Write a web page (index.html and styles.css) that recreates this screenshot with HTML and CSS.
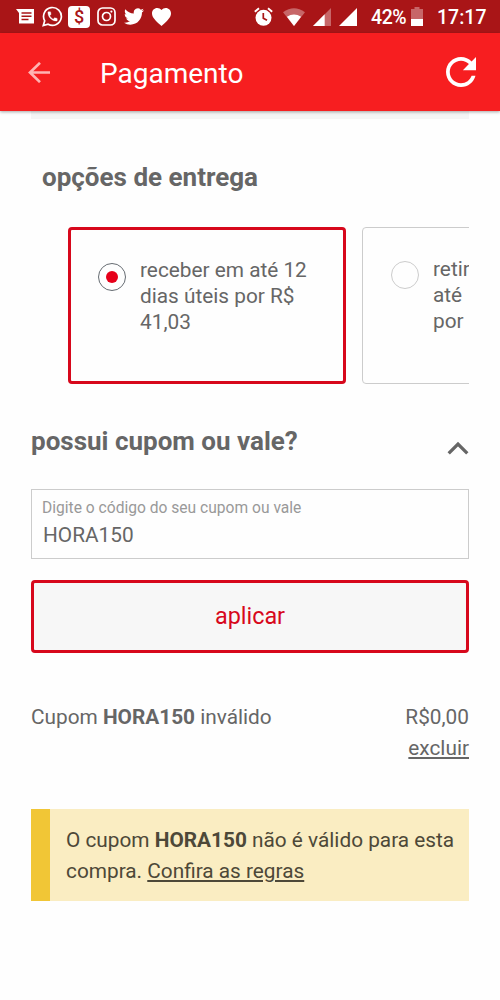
FILE: index.html
```html
<!DOCTYPE html>
<html lang="pt-BR">
<head>
<meta charset="utf-8">
<title>Pagamento</title>
<link rel="stylesheet" href="styles.css">
</head>
<body>
<div class="status">
  <div class="notifications">
    <svg width="18" height="15" viewBox="0 0 18 15"><path fill="#fff" fill-rule="evenodd" d="M0 0H18V14.500H3V4ZM5.500 3.300V4.800H15.500V3.300ZM5.500 6.500V8H15.500V6.500ZM5.500 9.700V11.200H12.500V9.700Z"/></svg>
    <svg class="whatsapp" width="21" height="21" viewBox="0 0 21 21"><path d="M1.300 19.600 2.700 14.800A8.900 8.900 0 1 1 6.100 18.200Z" fill="none" stroke="#fff" stroke-width="1.700"/><path transform="translate(4.300 4.100) scale(.52)" fill="#fff" stroke="#fff" stroke-width=".6" d="M6.620 10.790c1.440 2.830 3.760 5.140 6.590 6.590l2.200-2.200c.27-.27.67-.36 1.020-.24 1.120.37 2.330.57 3.570.57.55 0 1 .45 1 1V20c0 .55-.45 1-1 1-9.390 0-17-7.610-17-17 0-.55.45-1 1-1h3.500c.55 0 1 .45 1 1 0 1.250.2 2.450.57 3.570.11.35.03.74-.25 1.020z"/></svg>
    <span class="cash">$</span>
    <svg class="instagram" width="19" height="19" viewBox="0 0 19 19" fill="none" stroke="#fff"><rect x="1" y="1" width="17" height="17" rx="4.500" stroke-width="1.700"/><circle cx="9.500" cy="9.500" r="4" stroke-width="1.700"/><circle cx="14.400" cy="4.600" r="1.100" fill="#fff" stroke="none"/></svg>
    <svg class="twitter" width="20" height="17" viewBox="0 2 24 20"><path fill="#fff" d="M23.953 4.570a10 10 0 01-2.825.775 4.958 4.958 0 002.163-2.723c-.951.555-2.005.959-3.127 1.184a4.920 4.920 0 00-8.384 4.482C7.690 8.095 4.067 6.130 1.640 3.162a4.822 4.822 0 00-.666 2.475c0 1.710.87 3.213 2.188 4.096a4.904 4.904 0 01-2.228-.616v.06a4.923 4.923 0 003.946 4.827 4.996 4.996 0 01-2.212.085 4.936 4.936 0 004.604 3.417 9.867 9.867 0 01-6.102 2.105c-.39 0-.779-.023-1.170-.067a13.995 13.995 0 007.557 2.209c9.053 0 13.998-7.496 13.998-13.985 0-.21 0-.42-.015-.63A9.935 9.935 0 0024 4.590z"/></svg>
    <svg class="heart" width="19" height="18" viewBox="2 3 20 18.350" preserveAspectRatio="none"><path fill="#fff" d="M12 21.350l-1.450-1.320C5.400 15.360 2 12.280 2 8.500 2 5.420 4.420 3 7.500 3c1.740 0 3.410.81 4.500 2.090C13.090 3.810 14.760 3 16.500 3 19.580 3 22 5.420 22 8.500c0 3.780-3.400 6.860-8.550 11.540z"/></svg>
  </div>
  <svg width="19" height="19" viewBox="0 0 19 19"><circle cx="9.500" cy="10.800" r="8" fill="#fff"/><path d="M.8 4.700 5 1.200M18.200 4.700 14 1.200" stroke="#fff" stroke-width="1.900"/><path d="M9.300 6V11.200L13 13.300" fill="none" stroke="#a91517" stroke-width="1.700"/></svg>
  <svg class="wifi" width="22" height="18" viewBox="0 0 22 18"><path fill="#fff" fill-opacity=".35" d="M0 4.200Q11-3.800 22 4.200L11 18Z"/><path fill="#fff" d="M3.900 8.800Q11 4.300 18.100 8.800L11 18Z"/></svg>
  <svg class="signal" width="18" height="18" viewBox="0 0 18 18"><path fill="#fff" fill-opacity=".35" d="M18 0V18H0Z"/><path fill="#fff" d="M11.700 6.300V18H0Z"/></svg>
  <svg class="signal" width="18" height="18" viewBox="0 0 18 18"><path fill="#fff" d="M18 0V18H0Z"/></svg>
  <span class="percent">42%</span>
  <svg class="battery" width="12" height="19" viewBox="0 0 12 19"><path fill="#fff" fill-opacity=".35" d="M3.500 0H8.500V2H12V12H0V2H3.500Z"/><path fill="#fff" d="M0 12H12V19H0Z"/></svg>
  <span class="clock">17:17</span>
</div>
<header class="appbar">
  <svg width="22" height="21" viewBox="0 0 22 21" fill="none" stroke="#ffb3b2" stroke-width="2.700"><path d="M12 .9 2 10.500 12 20.100M2 10.500H22"/></svg>
  <h1 class="title">Pagamento</h1>
  <svg class="refresh" width="30" height="30" viewBox="4 4 16 16"><path fill="#fff" d="M17.650 6.350C16.200 4.900 14.210 4 12 4c-4.420 0-7.990 3.580-7.990 8s3.570 8 7.990 8c3.730 0 6.840-2.550 7.730-6h-2.080c-.82 2.330-3.040 4-5.650 4-3.310 0-6-2.690-6-6s2.690-6 6-6c1.660 0 3.140.69 4.220 1.780L13 11h7V4l-2.350 2.350z"/></svg>
</header>
<main class="content">
  <div class="strip"></div>
  <h2 class="heading delivery">opções de entrega</h2>
  <div class="options">
    <div class="option selected"><span class="radio checked"></span><span>receber em até 12<br>dias úteis por R$<br>41,03</span></div>
    <div class="option next"><span class="radio"></span><span>retir<br>até<br>por</span></div>
  </div>
  <div class="coupon-head">
    <h2 class="heading coupon-title">possui cupom ou vale?</h2>
    <svg class="chevron" width="22" height="14" viewBox="0 0 22 14"><path d="M1.700 12.300 11 3 20.300 12.300" fill="none" stroke="#666" stroke-width="3.300"/></svg>
  </div>
  <div class="field"><span class="label">Digite o código do seu cupom ou vale</span><span class="value">HORA150</span></div>
  <button class="apply">aplicar</button>
  <div class="summary">
    <span class="invalid">Cupom <b>HORA150</b> inválido</span>
    <div class="amount"><span class="price">R$0,00</span><a class="remove">excluir</a></div>
  </div>
  <div class="alert"><span class="alert-line">O cupom <b>HORA150</b> não é válido para esta</span><span class="alert-line second">compra. <a class="rules">Confira as regras</a></span></div>
</main>
</body>
</html>
```
FILE: styles.css
```css
* { box-sizing: border-box; }
body { margin: 0; width: 500px; height: 1000px; overflow: hidden; background: #fefefe; font-family: Roboto, "Liberation Sans", sans-serif; color: #666; }
svg { display: block; flex: none; }
span, h1, h2, a { white-space: nowrap; }
.status { height: 33px; background: #a91517; display: flex; align-items: center; padding-left: 16px; color: #fff; font-size: 19.500px; line-height: 33px; font-weight: 500; }
.notifications { display: flex; align-items: center; width: 238px; }
.whatsapp { margin-left: 8px; }
.cash { margin-left: 5px; width: 22px; height: 22px; border-radius: 4px; background: #fff; color: #a91517; font-size: 18px; line-height: 22px; text-align: center; font-weight: 500; }
.instagram { margin-left: 7px; }
.twitter { margin-left: 8px; }
.heart { margin-left: 8px; }
.wifi { margin-left: 10px; }
.signal { margin-left: 8px; }
.percent { margin-left: 14px; width: 40px; letter-spacing: -0.400px; padding-top: 2px; }
.clock { margin-left: 14px; padding-top: 2px; }
.appbar { height: 78px; background: #f71e20; display: flex; align-items: center; padding: 0 24px 0 28px; box-shadow: 0 1px 3px rgba(0, 0, 0, .35); position: relative; }
.title { margin: 0 0 0 50px; padding-top: 3px; flex: 1; color: #fff; font-size: 28px; font-weight: 400; line-height: 75px; }
.content { padding: 0 31px; }
.strip { height: 8px; background: #f5f5f5; }
.heading { margin: 0; font-size: 26px; line-height: 30px; font-weight: 700; }
.delivery { margin: 43px 0 0 11px; }
.options { display: flex; gap: 16px; margin-top: 35px; margin-left: 37px; height: 157px; overflow: hidden; }
.option { flex: none; width: 278px; border: 1px solid #ccc; border-radius: 4px; padding: 28px 0 0 28px; display: flex; align-items: flex-start; gap: 14px; font-size: 20.800px; line-height: 26px; }
.selected { border: 3px solid #d7081c; padding: 27px 0 0 27px; }
.radio { flex: none; width: 28px; height: 28px; margin-top: 5px; border: 1px solid #ccc; border-radius: 50%; }
.checked { margin-top: 6px; border-color: #666c72; display: flex; align-items: center; justify-content: center; }
.checked::after { content: ""; width: 12px; height: 12px; border-radius: 50%; background: #e6001a; }
.coupon-head { margin-top: 42px; height: 63px; display: flex; justify-content: space-between; }
.chevron { margin-top: 15px; }
.field { height: 70px; border: 1px solid #ccc; padding: 8px 10px; display: flex; flex-direction: column; }
.label { font-size: 15.600px; line-height: 20px; color: #999; }
.value { margin: 4px 0 0 1px; font-size: 20.800px; line-height: 26px; }
.apply { display: block; width: 438px; height: 73px; margin-top: 21px; padding: 0; border: 3px solid #d7081c; border-radius: 4px; background: #f7f7f7; color: #d7081c; font: 400 23.400px/67px Roboto, "Liberation Sans", sans-serif; }
.summary { display: flex; justify-content: space-between; margin-top: 49px; height: 107px; font-size: 20.800px; line-height: 31px; }
.amount { display: flex; flex-direction: column; align-items: flex-end; }
.remove, .rules { text-decoration: underline; text-decoration-thickness: 1.500px; text-underline-offset: 2px; }
.alert { height: 92px; border-left: 19px solid #f1c636; background: #faedc2; color: #4d4838; padding: 16px 0 0 16px; display: flex; flex-direction: column; font-size: 20.800px; line-height: 31px; }
```
